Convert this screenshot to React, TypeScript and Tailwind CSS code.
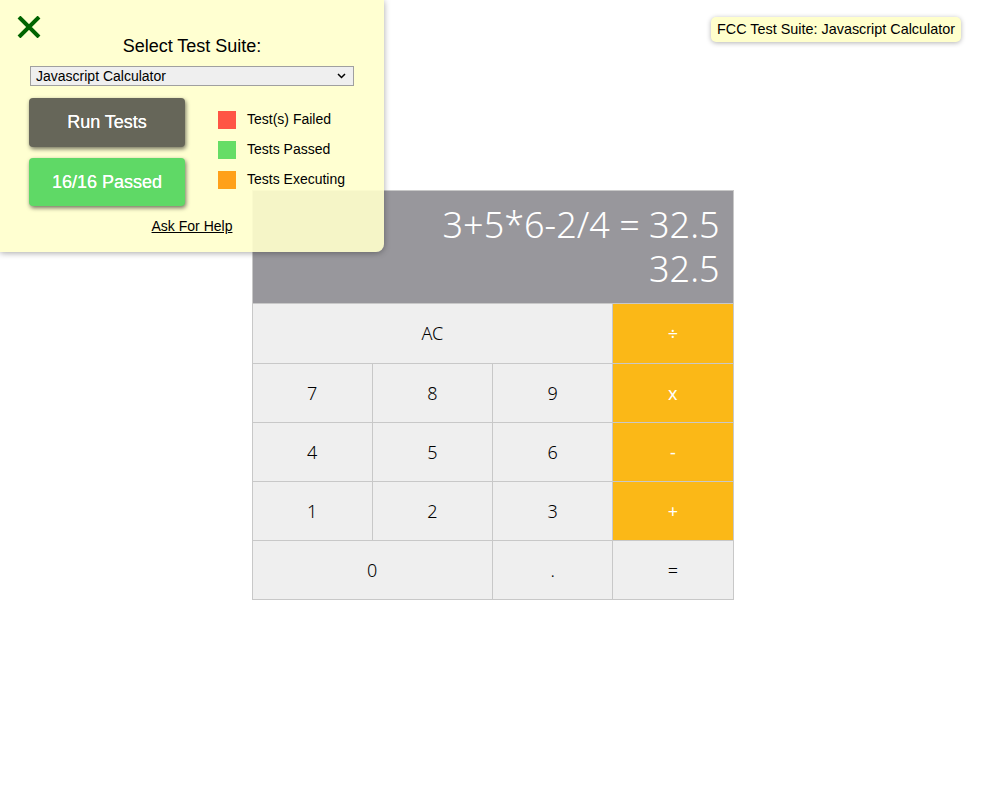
import React from 'react';

const keys: { label: string; span?: string; op?: boolean; tall?: boolean }[] = [
  { label: 'AC', span: 'col-span-3', tall: true },
  { label: '÷', op: true, tall: true },
  { label: '7' },
  { label: '8' },
  { label: '9' },
  { label: 'x', op: true },
  { label: '4' },
  { label: '5' },
  { label: '6' },
  { label: '-', op: true },
  { label: '1' },
  { label: '2' },
  { label: '3' },
  { label: '+', op: true },
  { label: '0', span: 'col-span-2' },
  { label: '.' },
  { label: '=' },
];

const Legend = ({ color, text }: { color: string; text: string }) => (
  <div className="flex items-center gap-[11px] h-[17px]">
    <span className={`w-[18px] h-[18px] ${color}`} />
    <span className="text-[14px] text-black">{text}</span>
  </div>
);

const TestPanel = () => (
  <div
    className="absolute left-0 top-0 w-[384px] h-[252px] bg-[#ffffcc]/90 rounded-br-[8px] shadow-[0_1px_6px_rgba(0,0,0,0.35)] text-black"
    style={{ fontFamily: '"Liberation Sans", Arial, sans-serif' }}
  >
    <svg className="absolute left-[17px] top-[16px]" width="24" height="22" viewBox="0 0 24 22">
      <path d="M2 1 L22 21 M22 1 L2 21" stroke="#006400" strokeWidth="4" />
    </svg>
    <div className="pt-[35px] text-center text-[18px] leading-[22px]">Select Test Suite:</div>
    <div className="mx-[30px] mt-[9px] h-[20px] border border-[#a0a0a0] bg-[#efefef] flex items-center justify-between pl-[5px] pr-[7px] text-[14px]">
      <span>Javascript Calculator</span>
      <svg width="9" height="6" viewBox="0 0 9 6">
        <path d="M1 1 L4.5 4.5 L8 1" stroke="#000" strokeWidth="1.5" fill="none" />
      </svg>
    </div>
    <div className="flex mt-[12px] pl-[29px]">
      <div className="flex flex-col gap-[11px]">
        <div className="w-[156px] h-[49px] rounded-[4px] bg-[#666659] text-white text-[18px] flex items-center justify-center shadow-[1px_2px_4px_rgba(0,0,0,0.55)] [text-shadow:0_0_0.4px_#fff]">
          Run Tests
        </div>
        <div className="w-[156px] h-[48px] rounded-[4px] bg-[#5fd966] text-white text-[18px] flex items-center justify-center shadow-[1px_2px_4px_rgba(0,0,0,0.55)] [text-shadow:0_0_0.4px_#fff]">
          16/16 Passed
        </div>
      </div>
      <div className="flex flex-col gap-[13px] ml-[33px] mt-[13px]">
        <Legend color="bg-[#ff5544]" text="Test(s) Failed" />
        <Legend color="bg-[#66dd66]" text="Tests Passed" />
        <Legend color="bg-[#ffa11a]" text="Tests Executing" />
      </div>
    </div>
    <div className="mt-[10px] text-center text-[14px] underline">Ask For Help</div>
  </div>
);

export default function App() {
  return (
    <div className="relative w-[985px] h-[789px] bg-white">
      <div className="pt-[190px] flex justify-center">
        <div
          className="w-[482px] border border-[#c8c8c8]"
          style={{ fontFamily: '"Noto Sans", "Open Sans", sans-serif' }}
        >
          <div className="h-[112px] bg-[#98979c] text-white font-light text-[36px] leading-[44px] flex flex-col items-end justify-center pr-[13px]">
            <div>3+5*6-2/4 = 32.5</div>
            <div>32.5</div>
          </div>
          <div className="grid grid-cols-4 gap-px bg-[#c8c8c8] border-t border-[#c8c8c8]">
            {keys.map((k) => (
              <div
                key={k.label}
                className={`${k.tall ? 'h-[59px]' : 'h-[58px]'} flex items-center justify-center text-[18px] ${k.span ?? ''} ${
                  k.op ? 'bg-[#fbb817] text-white font-normal' : 'bg-[#efefef] text-black font-light'
                }`}
              >
                {k.label}
              </div>
            ))}
          </div>
        </div>
      </div>
      <TestPanel />
      <div
        className="absolute left-[711px] top-[17px] h-[25px] px-[6px] flex items-center bg-[#ffffcc] rounded-[5px] shadow-[0_1px_5px_rgba(0,0,0,0.3)] text-[14.4px] text-black"
        style={{ fontFamily: '"Liberation Sans", Arial, sans-serif' }}
      >
        FCC Test Suite: Javascript Calculator
      </div>
    </div>
  );
}
